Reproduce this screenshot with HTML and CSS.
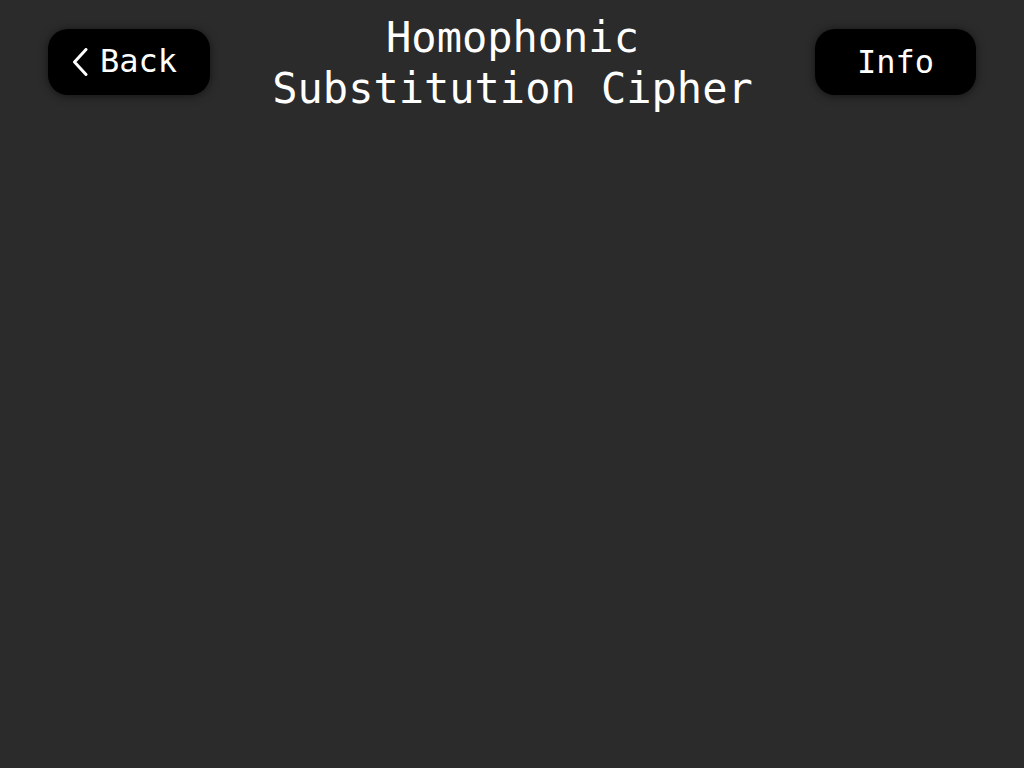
FILE: index.html
```html
<!DOCTYPE html>
<html lang="en">
<head>
<meta charset="utf-8">
<title>Homophonic Substitution Cipher</title>
<link rel="stylesheet" href="styles.css">
</head>
<body>
<header class="topbar">
  <button class="btn btn-back" type="button">
    <svg class="chev" width="16" height="28" viewBox="0 0 16 28" aria-hidden="true"><path d="M14 1.5 L2.5 14 L14 26.5" fill="none" stroke="#fff" stroke-width="3" stroke-linecap="round" stroke-linejoin="round"/></svg>
    <span>Back</span>
  </button>
  <h1 class="title">Homophonic<br>Substitution Cipher</h1>
  <button class="btn btn-info" type="button">Info</button>
</header>
</body>
</html>
```
FILE: styles.css
```css
html, body {
  margin: 0;
  padding: 0;
  height: 100%;
  background: #2b2b2b;
}
body {
  font-family: "DejaVu Sans Mono", "Liberation Mono", monospace;
  color: #fff;
}
.topbar {
  display: flex;
  justify-content: space-between;
  align-items: flex-start;
  padding: 12px 48px 0 48px;
}
.btn {
  margin-top: 17px;
  width: 162px;
  height: 66px;
  border: none;
  border-radius: 20px;
  background: #000;
  color: #fff;
  font-family: "DejaVu Sans Mono", "Liberation Mono", monospace;
  font-size: 32px;
  display: flex;
  align-items: center;
  justify-content: center;
  box-shadow: 0 1px 8px rgba(0, 0, 0, 0.55);
  padding: 0;
}
.btn-back {
  justify-content: flex-start;
  padding-left: 24px;
  gap: 12px;
}
.btn-back span {
  margin-top: -2px;
}
.btn-info {
  width: 161px;
  padding-top: 0;
}
.title {
  margin: 0;
  font-weight: normal;
  font-size: 42px;
  line-height: 51px;
  text-align: center;
}
```
